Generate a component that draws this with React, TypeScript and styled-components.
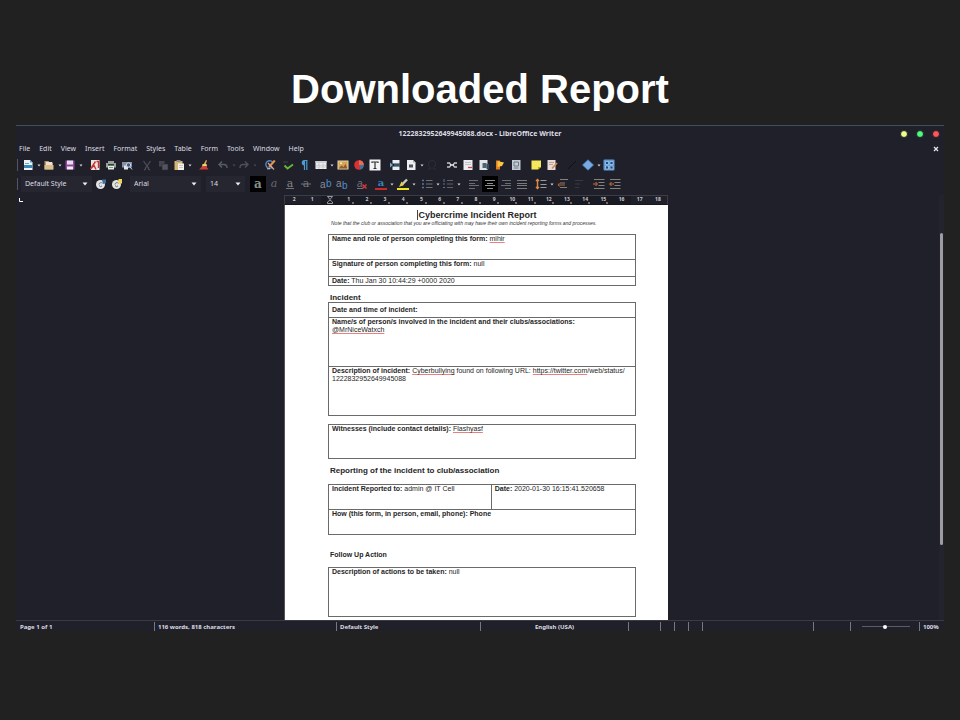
import React from "react";
import styled, { createGlobalStyle } from "styled-components";

const GlobalStyle = createGlobalStyle`
  * { box-sizing: border-box; }
  body { margin: 0; background: #212121; }
  button, select, input { font: inherit; color: inherit; margin: 0; padding: 0; border: 0; background: none; }
`;

const ui = `"Noto Sans", "Open Sans", sans-serif`;
const doc = `"Liberation Sans", Arial, sans-serif`;

const Slide = styled.main`
  min-height: 100vh;
  padding: 64px 16px 89px;
  background: #212121;
`;
const SlideTitle = styled.h1`
  margin: 0 0 11px;
  font: bold 40px/50px ${doc};
  color: #fff;
  text-align: center;
`;
const Window = styled.section`
  border-top: 1px solid #42505c;
  background: #20202a;
  color: #dcdce2;
  font: 7px/12px ${ui};
`;
const TitleBar = styled.header`
  display: grid;
  grid-template-columns: 1fr auto 1fr;
  align-items: center;
  height: 16px;
  font-weight: bold;
`;
const WindowButtons = styled.div`
  display: flex;
  justify-content: flex-end;
  gap: 8px;
  padding-right: 4px;
`;
const WindowButton = styled.button<{ $color: string }>`
  width: 8px;
  height: 8px;
  border: 1px solid #20202a;
  border-radius: 50%;
  background: ${(p) => p.$color};
`;
const MenuBar = styled.nav`
  display: flex;
  align-items: center;
  gap: 9px;
  height: 14px;
  padding: 0 5px 0 3px;
`;
const MenuItem = styled.button`
  white-space: nowrap;
`;
const CloseDocument = styled.button`
  display: flex;
  margin-left: auto;
`;
const Toolbar = styled.div<{ $h: number }>`
  display: flex;
  align-items: center;
  height: ${(p) => p.$h}px;
  padding-left: 1px;
`;
const Grip = styled.span`
  width: 1px;
  height: 12px;
  margin-right: 2px;
  background: #555560;
`;
const Tool = styled.button<{ $active?: boolean }>`
  display: flex;
  flex: none;
  align-items: center;
  justify-content: center;
  width: 16px;
  height: 16px;
  background: ${(p) => (p.$active ? "#000" : "none")};
`;
const ToolIcon = styled.svg`
  overflow: visible;
`;
const Drop = styled.button`
  display: flex;
  flex: none;
  align-items: center;
  justify-content: center;
  width: 5px;
  height: 16px;
`;
const Gap = styled.span<{ $w: number }>`
  flex: none;
  width: ${(p) => p.$w}px;
`;
const Combo = styled.label<{ $w: number }>`
  display: grid;
  grid-template-columns: 1fr 8px;
  align-items: center;
  width: ${(p) => p.$w}px;
  height: 16px;
  padding: 0 2px 0 4px;
  background: #262631;
`;
const ComboSelect = styled.select`
  appearance: none;
  width: 100%;
  outline: 0;
`;
const Workspace = styled.div`
  display: grid;
  grid-template-columns: 1fr 384px 1fr;
  align-items: stretch;
  padding-top: 1px;
`;
const LeftPane = styled.div`
  display: flex;
  align-items: flex-start;
  padding: 3px;
`;
const RightPane = styled.div`
  display: flex;
  justify-content: flex-end;
`;
const ScrollTrack = styled.div`
  width: 5px;
  padding: 38px 1px 0;
  background: #23232e;
`;
const ScrollThumb = styled.div`
  height: 312px;
  border-radius: 2px;
  background: #9c9ca2;
`;
const Column = styled.div`
  width: 384px;
  margin-left: -4px;
`;
const Ruler = styled.div`
  display: grid;
  grid-template-columns: repeat(21, minmax(0, 1fr));
  height: 10px;
  border: 1px solid #3c3c48;
  border-bottom-color: #17171f;
  font: bold 5px/6px ${ui};
  text-align: center;
`;
const RulerCell = styled.span<{ $margin?: boolean }>`
  display: flex;
  flex-direction: column;
  align-items: center;
  color: #c8c8d0;
  background: ${(p) => (p.$margin ? "#20202a" : "#1a1a22")};
`;
const TabMark = styled.i`
  align-self: flex-end;
  width: 2px;
  height: 2px;
  margin-right: 4px;
  background: #6c6c76;
`;
const Page = styled.article`
  padding: 5px 32px 3px 43px;
  background: #fff;
  color: #262626;
  font: 7px/8px ${doc};
  border-left: 1px solid #555;
`;
const DocTitle = styled.h2`
  margin: 0;
  padding-right: 10px;
  font-size: 9px;
  line-height: 10px;
  text-align: center;
`;
const Caret = styled.span`
  border-left: 1px solid #444;
`;
const Note = styled.p`
  margin: 0 0 8px;
  padding-left: 3px;
  font-size: 5px;
  line-height: 6px;
  font-style: italic;
  color: #333;
  white-space: nowrap;
`;
const Heading = styled.h3<{ $top: number; $bottom: number; $small?: boolean }>`
  margin: 0;
  padding: ${(p) => p.$top}px 2px ${(p) => p.$bottom}px;
  font-size: ${(p) => (p.$small ? 7 : 8)}px;
  line-height: 8px;
`;
const FormTable = styled.table<{ $top?: number }>`
  width: 100%;
  margin-top: ${(p) => p.$top ?? 0}px;
  border-collapse: collapse;
  table-layout: fixed;
`;
const Cell = styled.td<{ $h: number; $middle?: boolean }>`
  height: ${(p) => p.$h}px;
  padding: 0 0 0 3px;
  border: 1px solid #6a6a6a;
  vertical-align: ${(p) => (p.$middle ? "middle" : "top")};
  white-space: nowrap;
`;
const Misspelt = styled.span`
  text-decoration: underline #e88080 1px;
  text-decoration-skip-ink: none;
  text-underline-offset: 1px;
`;
const StatusBar = styled.footer`
  display: grid;
  grid-template-columns: 138fr 182fr 144fr 148fr 32fr 14fr 14fr 14fr 111fr 37fr 69fr 25fr;
  height: 11px;
  padding-top: 1px;
  border-top: 1px solid #3a3a44;
  font-size: 6px;
  line-height: 10px;
  font-weight: bold;
  white-space: nowrap;
`;
const StatusCell = styled.div<{ $center?: boolean; $first?: boolean }>`
  display: flex;
  align-items: center;
  justify-content: ${(p) => (p.$center ? "center" : "flex-start")};
  min-width: 0;
  height: 9px;
  padding-left: ${(p) => (p.$first ? 4 : p.$center ? 0 : 3)}px;
  border-left: ${(p) => (p.$first ? "0" : "1px solid #77777f")};
`;
const ZoomSlider = styled.input`
  appearance: none;
  width: 48px;
  height: 8px;
  margin-left: 8px;
  background: linear-gradient(#5c5c66, #5c5c66) center / 100% 1px no-repeat;
  &::-webkit-slider-thumb {
    appearance: none;
    width: 4px;
    height: 4px;
    border-radius: 50%;
    background: #fff;
  }
`;

const icons: Record<string, React.ReactNode> = {
  new: (<><path d="M2 1h6l2.500 2.500V11H2z" fill="#eef3f6" /><path d="M2 6h8.500v3H2z" fill="#3a87b8" /><path d="M8 1v2.500h2.500z" fill="#4aa0d0" /><path d="M3 4.500h4" stroke="#6fa9c9" /></>),
  open: (<><path d="M1.500 2h4l1 1.500H10v7H1.500z" fill="#b89a6a" /><path d="M3 3h6v4H3z" fill="#e9e2d4" /><path d="M1.500 6H10.500v4.500h-9z" fill="#dcc08c" /></>),
  save: (<><path d="M1.500 1.500h9v9h-9z" fill="#8d4a9c" /><path d="M3 1.500h6v4H3z" fill="#e8dcec" /><path d="M3 7.500h6v3H3z" fill="#f2edf3" /></>),
  pdf: (<><path d="M2 1h8.500v10H2z" fill="#eee4e2" /><path d="M1.500 10L6.500 2.500M7.500 2.500h2V9M2 9.500l3-3 2 4" fill="none" stroke="#c83434" strokeWidth="1.400" /></>),
  print: (<><path d="M3 2h6v2H3zM1 4h10v4.500H1z" fill="#9b9f9e" /><path d="M3 7h6v3.500H3z" fill="#e5eae4" /><path d="M3 5h6v1.500H3z" fill="#34403a" /><path d="M4 8.500h4" stroke="#64a36a" /></>),
  preview: (<><path d="M1 3h10v5.500H1z" fill="#8790a2" /><path d="M3 6.500h4v4H3z" fill="#dfe4ea" /><circle cx="7.500" cy="6" r="2.200" fill="#3d5b80" stroke="#cad4e0" /><path d="M9 8l2 2.500" stroke="#cad4e0" /></>),
  cut: (<path d="M2.500 2l5 7M9.500 2l-5 7M3 10.500a1 1 0 1 0 1-2M9 10.500a1 1 0 1 1-1-2" fill="none" stroke="#50505a" strokeWidth="1.200" />),
  copy: (<><path d="M2 2h5.500v5.500H2z" fill="#44444e" /><path d="M5 5h6v6H5z" fill="#54545e" stroke="#2a2a34" strokeWidth=".6" /></>),
  paste: (<><path d="M1.500 2h8v9h-8z" fill="#d6b476" /><path d="M3.500 1h4v2h-4z" fill="#8f8f8f" /><path d="M5 4.500h6V11H5z" fill="#f4f1ea" /><path d="M6 6.500h4M6 8.500h4" stroke="#b9b4aa" strokeWidth=".7" /></>),
  brush: (<><path d="M8 1l1 .5-1.500 4h-2z" fill="#e4a752" /><path d="M4.500 5h4l.5 2-5 1z" fill="#e9cf74" /><path d="M4 7.500l5-.5v1.500L10.500 10.500H1z" fill="#d23a35" /></>),
  undo: (<path d="M5 2.500L2 5.500l3 3M2.500 5.500H7q3 0 3 3.500" fill="none" stroke="#555c66" strokeWidth="1.400" />),
  redo: (<path d="M7 2.500l3 3-3 3M9.500 5.500H5q-3 0-3 3.500" fill="none" stroke="#4b515a" strokeWidth="1.400" />),
  find: (<><path d="M8.500 3A3.800 3.800 0 1 0 8.500 8" fill="none" stroke="#5488c8" strokeWidth="1.400" /><path d="M3 9.800h3" stroke="#c6cedb" /><path d="M10.800 1.500L5 8" stroke="#e49447" strokeWidth="2" /><path d="M4 4L10 10.500" stroke="#d9a890" strokeWidth="1.200" /></>),
  check: (<><path d="M1 3h5" stroke="#3b3f48" /><path d="M2.500 6.500l3 3 5.500-4" fill="none" stroke="#64b43c" strokeWidth="1.900" /></>),
  pilcrow: (<><path d="M5.500 1.500H9.500M6.500 1.500V11M8.800 1.500V11" stroke="#4b9cd4" strokeWidth="1.200" /><path d="M6.500 1a2.600 2.600 0 0 0 0 5.500z" fill="#4b9cd4" /></>),
  table: (<><path d="M.5 2h11v8H.5z" fill="#efefef" /><path d="M.5 2h11v2H.5z" fill="#cfcfd2" /><path d="M.5 6.200h11M.5 8h11M4 4v6M8 4v6" stroke="#b5b5ba" strokeWidth=".6" /></>),
  image: (<><path d="M.5 1.500h11v9H.5z" fill="#e3d5bc" /><path d="M1.500 2.500h9v7h-9z" fill="#d9a34c" /><path d="M1.500 9.500l3-3 2 1.500 2-3 2 4.500z" fill="#8a5d32" /><circle cx="4" cy="4.300" r="1" fill="#fff2b8" /></>),
  chart: (<><circle cx="6" cy="6" r="4.800" fill="#d83232" /><path d="M6 6V1.200A4.800 4.800 0 0 1 10.800 6z" fill="#f06a50" /><path d="M6 6h4.800A4.800 4.800 0 0 1 7.500 10.500z" fill="#2d7ca8" /></>),
  textbox: (<><path d="M.5 .5h11v11H.5z" fill="#f3f3f3" /><path d="M3 4V3h6v1M6 3v6.500M4.500 9.500h3" fill="none" stroke="#303036" strokeWidth="1.200" /></>),
  pagebreak: (<><path d="M3.500 1h7v3.500h-7zM3.500 7.500h7V11h-7z" fill="#e9eef2" /><path d="M5 6h6" stroke="#4f89b3" /><path d="M1 3.500L4 6 1 8.500z" fill="#69a9d4" /></>),
  field: (<><path d="M2 1h6l2.500 2.500V11H2z" fill="#eeeef0" /><path d="M4 5.500h4v3H4z" fill="#4c5564" /><path d="M8 1v2.500h2.500z" fill="#a8acb4" /></>),
  omega: (<path d="M2 10h2.500V8.500A3.700 3.700 0 1 1 7.500 8.500V10H10" fill="none" stroke="#2e2e38" />),
  link: (<><path d="M1 4h2.500l1.500 2-1.500 2H1M11 4H8.500L7 6l1.500 2H11" fill="none" stroke="#c4c6ca" strokeWidth="1.300" /><path d="M4 6h4" stroke="#f1f1f1" strokeWidth="1.300" /></>),
  footnote: (<><path d="M1.500 1h9v10h-9z" fill="#ececee" /><path d="M3 3.500h6M3 5.500h6" stroke="#b4b8be" strokeWidth=".8" /><path d="M6 8.500h4" stroke="#d04646" strokeWidth="1.300" /></>),
  endnote: (<><path d="M1.500 1h8v10h-8z" fill="#e2e5e8" /><path d="M4.500 4h4v5h-4z" fill="#4e6276" /><path d="M8.500 5H11v5H8.500z" fill="#354a61" /></>),
  bookmark: (<><path d="M2 1.500h4v9H2z" fill="#e57c22" /><path d="M3.500 2l6.500 1.500L8 7l-4.500 1z" fill="#f6c747" /></>),
  crossref: (<><path d="M2 1h8.500v10H2z" fill="#c4cad2" /><path d="M4 3h4.500v4H4zM4 9h4.500" fill="none" stroke="#68737f" strokeWidth=".9" /></>),
  comment: (<><path d="M1.500 1.500h9.500v6.500l-3 2.500H1.500z" fill="#f5e85d" /><path d="M8 10.500V8h3z" fill="#b9a728" /></>),
  track: (<><path d="M1.500 1h8v10h-8z" fill="#e8dcd7" /><path d="M3 3.500h5M3 5.500h4" stroke="#b49185" strokeWidth=".8" /><path d="M11 4L6 9.500" stroke="#d78a50" strokeWidth="1.700" /></>),
  line: (<path d="M2 10l8-8" stroke="#101017" strokeWidth="1" />),
  diamond: (<path d="M6 .8L11.500 6 6 11.200.5 6z" fill="#79a9e2" stroke="#4b7fc0" strokeWidth=".7" />),
  form: (<><rect x=".5" y=".5" width="11" height="11" rx="1" fill="#5c9ad8" /><path d="M2.500 2.500h3v3h-3zM7 2.500h3v3H7zM2.500 7h3v3h-3zM7 7h3v3H7z" fill="#214e82" stroke="#c7def4" strokeWidth=".6" /></>),
  style1: (<><circle cx="5.500" cy="6.500" r="4.500" fill="#e3e6e9" /><path d="M4 6.500a2 2 0 0 1 3.500-1.200M7 8a2 2 0 0 1-3-.5" fill="none" stroke="#62707e" /><path d="M7 1.500h4v3.500l-3 1z" fill="#406e9c" /></>),
  style2: (<><circle cx="5.500" cy="6.500" r="4.500" fill="#e3e3dd" /><path d="M4 6.500a2 2 0 0 1 3.500-1.200M7 8a2 2 0 0 1-3-.5" fill="none" stroke="#6b6d6c" /><path d="M7.500 1h3.500v4.500H7.500z" fill="#f0d54b" /></>),
  bold: (<text x="6" y="9.500" textAnchor="middle" fontFamily="DejaVu Serif" fontWeight="bold" fontSize="12" fill="#83908a">a</text>),
  italic: (<text x="6" y="9" textAnchor="middle" fontFamily="DejaVu Serif" fontStyle="italic" fontSize="11" fill="#666a70">a</text>),
  underline: (<><text x="6" y="8.500" textAnchor="middle" fontFamily="DejaVu Serif" fontSize="11" fill="#80858a">a</text><path d="M2 10.500h8" stroke="#70757a" /></>),
  strike: (<><text x="6" y="9" textAnchor="middle" fontFamily="DejaVu Serif" fontSize="11" fill="#70757a">a</text><path d="M1 6h10" stroke="#70757a" /></>),
  sup: (<><text x="0" y="10" fontFamily="Liberation Sans" fontSize="10" fill="#8a8e94">a</text><text x="6" y="8.500" fontFamily="Liberation Sans" fontSize="10" fill="#4a90cc">b</text></>),
  sub: (<><text x="0" y="9" fontFamily="Liberation Sans" fontSize="10" fill="#8a8e94">a</text><text x="6" y="11" fontFamily="Liberation Sans" fontSize="10" fill="#4a90cc">b</text></>),
  clear: (<><text x="1" y="9" fontFamily="Liberation Sans" fontStyle="italic" fontSize="10" fill="#70747c">a</text><path d="M1 10.500h6" stroke="#70747c" /><path d="M6.500 6.500l4 4M10.500 6.500l-4 4" stroke="#d63737" strokeWidth="1.500" /></>),
  color: (<><text x="6" y="8" textAnchor="middle" fontFamily="DejaVu Serif" fontWeight="bold" fontSize="10" fill="#3a82bb">a</text><path d="M0 11h12" stroke="#c92a2a" strokeWidth="2" /></>),
  highlight: (<><path d="M10 1.500L4.500 7" stroke="#c9cdb8" strokeWidth="2.400" /><path d="M4.500 3.500L2 9l5-2z" fill="#e7cf49" /><path d="M0 11h12" stroke="#f2e522" strokeWidth="2" /></>),
  bullets: (<><path d="M5 2.500h6.500M5 6h6.500M5 9.500h6.500" stroke="#6d7076" /><path d="M1 2.500h2M1 6h2M1 9.500h2" stroke="#56789a" strokeWidth="1.600" /></>),
  numbers: (<><path d="M5 2.500h6M5 6h6M5 9.500h6" stroke="#5d6066" /><path d="M2 1v3M1 6h2M1 9.500h2" stroke="#56789a" /></>),
  left: (<path d="M1 2.500h9M1 5.500h6M1 7.500h10M1 10.500h6" stroke="#6a6e70" />),
  center: (<path d="M1 2.500h10M3 5.500h6M1 7.500h10M3 10.500h6" stroke="#8c918f" />),
  right: (<path d="M2 2.500h9M5 5.500h6M1 7.500h10M5 10.500h6" stroke="#6a6e70" />),
  justify: (<path d="M1 2.500h10M1 5.500h10M1 7.500h10M1 10.500h10" stroke="#777b7d" />),
  spacing: (<><path d="M2.500 1.500v9M1 3l1.500-1.500L4 3M1 9l1.500 1.500L4 9" fill="none" stroke="#e08a4a" strokeWidth="1.400" /><path d="M5.500 2.500h6M5.500 6.500h6M5.500 9.500h6" stroke="#9a9a9a" /></>),
  above: (<><path d="M3 1.500h8M3 5h5M3 9.500h7" stroke="#85817e" /><path d="M1 7h7M2.500 5L1 7l1.500 1.500" fill="none" stroke="#b2642f" /></>),
  below: (<path d="M2 2.500h8M2 6h5M2 9.500h4" stroke="#383842" />),
  indent: (<><path d="M1 1.500h10.500M5.500 4.500h6M5.500 7.500h6M1 10.500h10.500" stroke="#85817e" /><path d="M0 6h4M2.500 4L4.500 6l-2 2" fill="none" stroke="#d2743a" /></>),
  outdent: (<><path d="M1 1.500h10.500M5.500 4.500h6M5.500 7.500h6M1 10.500h10.500" stroke="#85817e" /><path d="M1 6h4M2.500 4L.5 6l2 2" fill="none" stroke="#d2743a" /></>),
};

const Arrow = ({ dim }: { dim?: boolean }) => (
  <svg width="4" height="3" viewBox="0 0 4 3"><path d="M.500 .5h3L2 2.500z" fill={dim ? "#4a4a54" : "#d8d8dc"} /></svg>
);
const ComboArrow = () => (
  <svg width="6" height="4" viewBox="0 0 6 4"><path d="M.500 .5h5L3 3.500z" fill="#f0f0f2" /></svg>
);

type Item = string | number;
/* Strings name an icon, "v" opens a drop-down, "-" is a disabled drop-down, numbers are spacing. */
const standard: Item[] = ["new", "v", "open", "v", "save", "v", 4, "pdf", "print", "preview", 4, "cut", "copy", "paste", "v", 4, "brush", 3, "undo", "-", "redo", "-", 5, "find", 2, "check", "pilcrow", 1, "table", "v", 1, "image", "chart", "textbox", 4, "pagebreak", "field", "v", "omega", 4, "link", "footnote", "endnote", "bookmark", "crossref", 4, "comment", "track", 4, "line", "diamond", "v", "form"];
const formatting: Item[] = [5, "bold", "italic", "underline", "strike", 4, "sup", "sub", 4, "clear", 3, "color", "v", 1, "highlight", "v", 3, "bullets", "v", "numbers", "v", 5, "left", "center", "right", "justify", 3, "spacing", "v", 1, "above", "below", 4, "indent", "outdent"];

const Tools = ({ items }: { items: Item[] }) => (
  <>
    {items.map((it, i) =>
      typeof it === "number" ? <Gap key={i} $w={it} /> :
      it === "v" || it === "-" ? <Drop key={i} aria-label="More"><Arrow dim={it === "-"} /></Drop> :
      <Tool key={i} aria-label={it} $active={it === "bold" || it === "center"}>
        <ToolIcon width="12" height="12" viewBox="0 0 12 12">{icons[it]}</ToolIcon>
      </Tool>
    )}
  </>
);
const Picker = ({ label, value, width }: { label: string; value: string; width: number }) => (
  <Combo $w={width}>
    <ComboSelect aria-label={label}><option>{value}</option></ComboSelect>
    <ComboArrow />
  </Combo>
);

const menus = ["File", "Edit", "View", "Insert", "Format", "Styles", "Table", "Form", "Tools", "Window", "Help"];
const rulerMarks = ["2", "1", "", ...Array.from({ length: 18 }, (_, i) => String(i + 1))];

export default function App() {
  return (
    <>
      <GlobalStyle />
      <Slide>
        <SlideTitle>Downloaded Report</SlideTitle>
        <Window>
          <TitleBar>
            <span />
            <span>1222832952649945088.docx - LibreOffice Writer</span>
            <WindowButtons>
              <WindowButton $color="#f1fa8c" aria-label="Minimize" />
              <WindowButton $color="#50fa7b" aria-label="Maximize" />
              <WindowButton $color="#ff5555" aria-label="Close" />
            </WindowButtons>
          </TitleBar>
          <MenuBar>
            {menus.map((m) => <MenuItem key={m}>{m}</MenuItem>)}
            <CloseDocument aria-label="Close document">
              <svg width="6" height="6" viewBox="0 0 6 6"><path d="M1 1l4 4M5 1L1 5" stroke="#e6e6ea" strokeWidth="1.300" /></svg>
            </CloseDocument>
          </MenuBar>
          <Toolbar $h={18}><Grip /><Tools items={standard} /></Toolbar>
          <Toolbar $h={20}>
            <Grip />
            <Gap $w={1} />
            <Picker label="Paragraph style" value="Default Style" width={71} />
            <Gap $w={1} />
            <Tools items={["style1", "style2"]} />
            <Gap $w={5} />
            <Picker label="Font name" value="Arial" width={71} />
            <Gap $w={5} />
            <Picker label="Font size" value="14" width={39} />
            <Tools items={formatting} />
          </Toolbar>
          <Workspace>
            <LeftPane>
              <svg width="4" height="4" viewBox="0 0 4 4"><path d="M.5 0v3.500H4" fill="none" stroke="#fff" /></svg>
            </LeftPane>
            <Column>
              <Ruler>
                {rulerMarks.map((m, i) => (
                  <RulerCell key={i} $margin={i < 2 || i > 18}>
                    {m || (
                      <svg width="6" height="8" viewBox="0 0 6 8"><path d="M.5.500h5L3 3.500zM3 4l2.500 2v1.500h-5V6z" fill="none" stroke="#b8b8c0" strokeWidth=".8" /></svg>
                    )}
                    {m && i > 2 && i < 18 && <TabMark />}
                  </RulerCell>
                ))}
              </Ruler>
              <Page>
                <DocTitle><Caret />Cybercrime Incident Report</DocTitle>
                <Note>Note that the club or association that you are officiating with may have their own incident reporting forms and processes.</Note>
                <FormTable>
                  <tbody>
                    <tr><Cell $h={25}><b>Name and role of person completing this form:</b> <Misspelt>mihir</Misspelt></Cell></tr>
                    <tr><Cell $h={17}><b>Signature of person completing this form:</b> null</Cell></tr>
                    <tr><Cell $h={8}><b>Date:</b> Thu Jan 30 10:44:29 +0000 2020</Cell></tr>
                  </tbody>
                </FormTable>
                <Heading $top={8} $bottom={0}>Incident</Heading>
                <FormTable>
                  <tbody>
                    <tr><Cell $h={15} $middle><b>Date and time of incident:</b></Cell></tr>
                    <tr><Cell $h={49}><b>Name/s of person/s involved in the incident and their clubs/associations:</b><br /><Misspelt>@MrNiceWatxch</Misspelt></Cell></tr>
                    <tr><Cell $h={49}><b>Description of incident:</b> <Misspelt>Cyberbullying</Misspelt> found on following URL: <Misspelt>https://twitter.com</Misspelt>/web/status/<br />1222832952649945088</Cell></tr>
                  </tbody>
                </FormTable>
                <FormTable $top={8}>
                  <tbody>
                    <tr><Cell $h={34}><b>Witnesses (include contact details):</b> <Misspelt>Flashyasf</Misspelt></Cell></tr>
                  </tbody>
                </FormTable>
                <Heading $top={8} $bottom={9}>Reporting of the incident to club/association</Heading>
                <FormTable>
                  <colgroup><col width="53%" /><col /></colgroup>
                  <tbody>
                    <tr>
                      <Cell $h={25}><b>Incident Reported to:</b> admin @ IT Cell</Cell>
                      <Cell $h={25}><b>Date:</b> 2020-01-30 16:15:41.520658</Cell>
                    </tr>
                    <tr><Cell $h={25} colSpan={2}><b>How (this form, in person, email, phone): Phone</b></Cell></tr>
                  </tbody>
                </FormTable>
                <Heading $top={16} $bottom={8} $small>Follow Up Action</Heading>
                <FormTable>
                  <tbody>
                    <tr><Cell $h={49}><b>Description of actions to be taken:</b> null</Cell></tr>
                  </tbody>
                </FormTable>
              </Page>
            </Column>
            <RightPane><ScrollTrack><ScrollThumb /></ScrollTrack></RightPane>
          </Workspace>
          <StatusBar>
            <StatusCell $first>Page 1 of 1</StatusCell>
            <StatusCell>116 words, 818 characters</StatusCell>
            <StatusCell>Default Style</StatusCell>
            <StatusCell $center>English (USA)</StatusCell>
            <StatusCell /><StatusCell /><StatusCell /><StatusCell /><StatusCell /><StatusCell />
            <StatusCell><ZoomSlider type="range" aria-label="Zoom" min={0} max={100} defaultValue={48} /></StatusCell>
            <StatusCell>100%</StatusCell>
          </StatusBar>
        </Window>
      </Slide>
    </>
  );
}
